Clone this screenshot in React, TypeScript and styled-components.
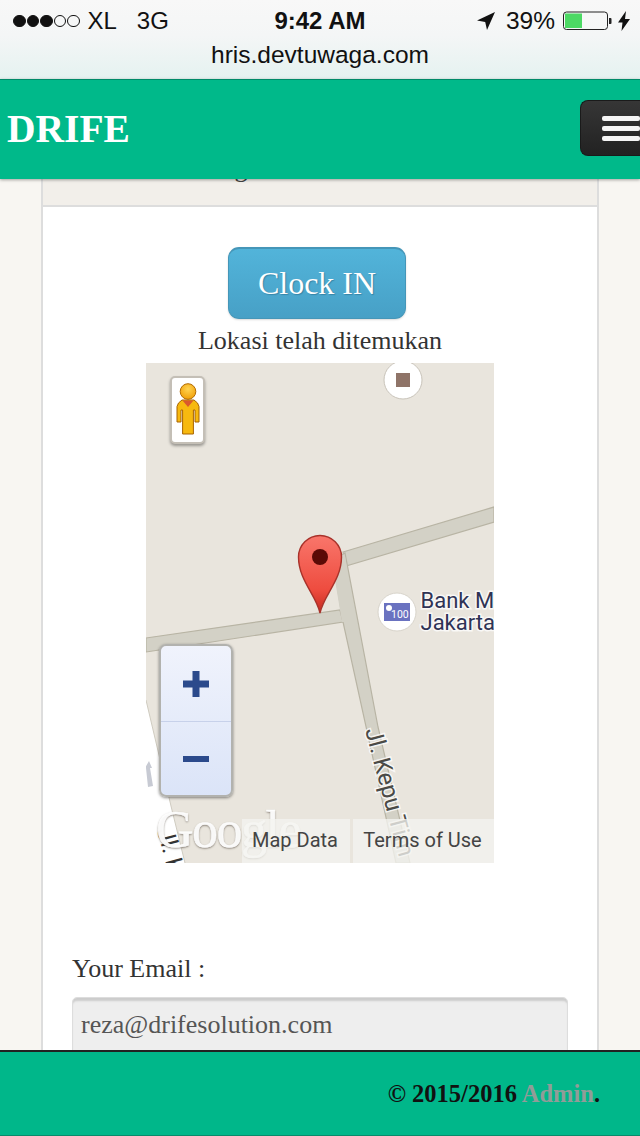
import React from "react";
import styled, { createGlobalStyle } from "styled-components";

const Global = createGlobalStyle`
  html, body { margin: 0; padding: 0; background: #f8f6f2; }
  * { box-sizing: border-box; }
`;

const Screen = styled.div`
  width: 640px;
  height: 1136px;
  display: flex;
  flex-direction: column;
  overflow: hidden;
  font-family: "Liberation Serif", "Times New Roman", serif;
  color: #333;
`;

const Chrome = styled.header`
  height: 79px;
  flex: none;
  background: linear-gradient(#f8f8f8 0%, #f4f6f6 45%, #e5f2f0 100%);
  font-family: "Liberation Sans", Arial, sans-serif;
  color: #111;
`;

const StatusBar = styled.div`
  height: 40px;
  padding: 2px 10px 0 13px;
  display: grid;
  grid-template-columns: 1fr auto 1fr;
  align-items: center;
  font-size: 24px;
`;

const StatusSide = styled.div<{ $end?: boolean }>`
  display: flex;
  align-items: center;
  justify-content: ${(p) => (p.$end ? "flex-end" : "flex-start")};
`;

const Signal = styled.div`
  display: flex;
  gap: 1px;
  margin-right: 8px;
`;

const Dot = styled.span<{ $on: boolean }>`
  width: 12.5px;
  height: 12.5px;
  border-radius: 50%;
  border: 1px solid #111;
  background: ${(p) => (p.$on ? "#111" : "transparent")};
`;

const Carrier = styled.span`
  margin-right: 20px;
`;

const Clock = styled.div`
  font-weight: 700;
  font-size: 24px;
  margin-right: 3px;
`;

const Percent = styled.span`
  margin: 0 8px 0 11px;
  font-size: 24.5px;
`;

const Address = styled.div`
  text-align: center;
  font-size: 24.5px;
  line-height: 30px;
`;

const NavBar = styled.nav`
  height: 100px;
  flex: none;
  background: #00b98a;
  border-top: 1px solid #008a68;
  box-shadow: 0 1px 3px rgba(0, 0, 0, 0.35);
  display: flex;
  align-items: center;
  justify-content: space-between;
  padding-left: 7px;
  position: relative;
  z-index: 2;
`;

const Brand = styled.div`
  color: #fff;
  font-weight: 700;
  font-size: 39.5px;
  position: relative;
  top: -1px;
`;

const MenuToggle = styled.button`
  width: 60px;
  height: 56px;
  margin-top: -3px;
  padding: 0 0 0 21px;
  border: 1px solid #1a1a1a;
  border-right: 0;
  border-radius: 8px 0 0 8px;
  background: linear-gradient(#363636, #222);
  display: flex;
  flex-direction: column;
  justify-content: center;
  gap: 5px;
`;

const MenuBar = styled.span`
  display: block;
  width: 38px;
  height: 5px;
  border-radius: 2px;
  background: #f5f5f5;
`;

const Main = styled.main`
  flex: 1;
  min-height: 0;
  overflow: hidden;
  padding: 0 41px;
`;

const Panel = styled.section`
  border: 2px solid #ddd;
  border-top: 0;
  background: #fff;
`;

const PanelHeading = styled.div`
  height: 28px;
  background: #f2efea;
  border-bottom: 2px solid #ddd;
  overflow: hidden;
  font-size: 26px;
  line-height: 28px;
  padding-left: 97px;
  color: #444;
`;

const PanelHeadingText = styled.span`
  display: block;
  margin-top: -24px;
`;

const PanelBody = styled.div`
  padding: 40px 29px 0;
  display: flex;
  flex-direction: column;
  align-items: center;
`;

const ClockButton = styled.button`
  width: 178px;
  height: 72px;
  margin-right: 6px;
  border: 1px solid #4596b8;
  border-top: 2px solid #4596b8;
  border-radius: 11px;
  background: linear-gradient(#52b4da, #47a0c6);
  color: #fff;
  font-family: "Liberation Serif", serif;
  font-size: 32px;
  box-shadow: 0 1px 2px rgba(0, 0, 0, 0.15);
  text-shadow: 1px 1px 1px rgba(30, 90, 120, 0.45);
`;

const Status = styled.div`
  height: 44px;
  line-height: 44px;
  font-size: 26px;
`;

const MapCanvas = styled.div`
  width: 348px;
  height: 500px;
  position: relative;
  overflow: hidden;
  background: #e9e5dd;
  font-family: Roboto, sans-serif;
`;

const MapDrawing = styled.svg`
  position: absolute;
  left: 0;
  top: 0;
`;

const PegmanBox = styled.div`
  position: absolute;
  left: 24px;
  top: 13px;
  width: 35px;
  height: 68px;
  background: #fff;
  border: 2px solid #c4bfb6;
  border-radius: 5px;
  box-shadow: 0 2px 3px rgba(0, 0, 0, 0.35);
  display: flex;
  justify-content: center;
  padding-top: 5px;
`;

const ZoomControl = styled.div`
  position: absolute;
  left: 13px;
  top: 281px;
  width: 74px;
  height: 153px;
  border: 2px solid #b2b2ae;
  border-radius: 7px;
  background: linear-gradient(#f0f3fc, #dbe4f8);
  box-shadow: 0 1px 3px rgba(0, 0, 0, 0.45);
  display: grid;
  grid-template-rows: 76px 1fr;
`;

const ZoomPart = styled.div<{ $divider?: boolean }>`
  display: flex;
  align-items: center;
  justify-content: center;
  border-bottom: ${(p) => (p.$divider ? "1px solid #c7d1ea" : "0")};
`;

const LogoText = styled.div`
  position: absolute;
  left: 10px;
  top: 437px;
  font-family: "Liberation Serif", serif;
  font-size: 52px;
  line-height: 60px;
  letter-spacing: -1.5px;
  color: rgba(255, 255, 255, 0.95);
  -webkit-text-stroke: 0.5px #fff;
  text-shadow: 0 1px 2px rgba(90, 80, 70, 0.8);
`;

const Attribution = styled.div`
  position: absolute;
  left: 96px;
  right: 0;
  bottom: 0;
  height: 44px;
  display: grid;
  grid-template-columns: 108px 141px;
  column-gap: 3px;
`;

const AttributionLink = styled.div`
  background: rgba(244, 243, 240, 0.78);
  font-size: 20px;
  line-height: 42px;
  color: #444;
  text-align: center;
  padding-right: 2px;
`;

const EmailLabel = styled.label`
  align-self: stretch;
  margin-top: 89px;
  font-size: 26px;
  line-height: 34px;
`;

const EmailField = styled.div`
  align-self: stretch;
  height: 70px;
  margin-top: 11px;
  padding: 8px 0 0 8px;
  background: #eee;
  border: 1px solid #ddd;
  border-radius: 5px;
  box-shadow: inset 0 4px 2px -1px #ccc;
  font-size: 26px;
  line-height: 38px;
  color: #555;
`;

const Footer = styled.footer`
  height: 86px;
  flex: none;
  background: #00b78a;
  border-top: 2px solid #222;
  border-bottom: 1px solid #088a6b;
  padding: 28px 40px 0 0;
  text-align: right;
  font-size: 24.5px;
  font-weight: 700;
  line-height: 28px;
  color: #111;
  position: relative;
  z-index: 2;
`;

const AdminLink = styled.span`
  color: #919c98;
`;

const halo = { paintOrder: "stroke", stroke: "#fff", strokeWidth: 3, strokeOpacity: 0.75 } as const;

const LocationArrow = () => (
  <svg width="18" height="18" viewBox="0 0 18 18" style={{ marginLeft: -2 }}>
    <path d="M18 0 0 8.5l8.2 1.6L10 18z" fill="#111" />
  </svg>
);

const Battery = () => (
  <svg width="50" height="20" viewBox="0 0 50 20">
    <rect x="0.5" y="1" width="44" height="17.5" rx="3" fill="none" stroke="#222" />
    <rect x="2" y="2.5" width="17" height="14.5" fill="#4cd964" />
    <path d="M46 7h1.5a1 1 0 0 1 1 1v4a1 1 0 0 1-1 1H46z" fill="#222" />
  </svg>
);

const Bolt = () => (
  <svg width="12" height="20" viewBox="0 0 12 20" style={{ marginLeft: 5 }}>
    <path d="M8 0 0 11.5h4.5L3.5 20 12 8H7z" fill="#111" />
  </svg>
);

const Pegman = () => (
  <svg width="24" height="52" viewBox="0 0 24 52">
    <defs>
      <radialGradient id="peg" cx="50%" cy="35%" r="60%">
        <stop offset="0" stopColor="#ffd452" />
        <stop offset="1" stopColor="#f2a40e" />
      </radialGradient>
    </defs>
    <circle cx="12" cy="8.5" r="7.8" fill="url(#peg)" stroke="#b36b00" strokeWidth="1" />
    <path d="M6 17h12l3.500 3 1.500 3.500V39h-4V27h-1.600v24H6.600V27H5v12H1V23.500L2.500 20z" fill="#f7b90f" stroke="#a76300" strokeWidth="1" />
    <path d="M6.500 17.500h11L12 24z" fill="#d9592d" />
  </svg>
);

const ZoomPlus = () => (
  <svg width="26" height="26" viewBox="0 0 26 26">
    <path d="M9.500 0h7v9.500H26v7h-9.500V26h-7v-9.500H0v-7h9.500z" fill="#2b4a8c" />
  </svg>
);

const ZoomMinus = () => (
  <svg width="26" height="6" viewBox="0 0 26 6">
    <rect width="26" height="6" fill="#2b4a8c" />
  </svg>
);

const road = { fill: "#d3d1c6", stroke: "#b8b4a4", strokeWidth: 1.2 };

const MapArt = () => (
  <MapDrawing width="348" height="500" viewBox="0 0 348 500">
    <defs>
      <linearGradient id="pin" x1="0" y1="0" x2="0" y2="1">
        <stop offset="0" stopColor="#f9766b" />
        <stop offset="0.7" stopColor="#ee4c3f" />
        <stop offset="1" stopColor="#c52a20" />
      </linearGradient>
    </defs>
    <path d="M0 337 25 443 39 500H0z" fill="#fff" />
    <path d="M0 337 25 443 39 500" fill="none" stroke="#cfcbc0" />
    <path d="M0 275 194 247 197 259 0 289z" {...road} />
    <path d="M197 189 348 144V159L200 203z" {...road} />
    <path d="M187 197 199 190 232 364 264 500H250L197 259z" {...road} />
    <path d="M186 199 199 193 209 259 196 259z" fill="#d3d1c6" />
    <path d="M-1 405l4-7 3 7-2 0 3 18-5 1-2-19z" fill="#c7cad3" />
    <text transform="translate(11 467) rotate(75)" fontFamily="Roboto, sans-serif" fontSize="24" fill="#333">Jl. K</text>
    <text transform="translate(219 367) rotate(75)" fontFamily="Roboto, sans-serif" fontSize="24" fill="#4a4a46" {...halo}>Jl. Kepu Tim</text>

    <circle cx="257" cy="17" r="19" fill="#fff" stroke="#c9c4ba" />
    <rect x="250" y="10" width="14" height="14" fill="#8f7468" />

    <circle cx="251" cy="249" r="19" fill="#fff" stroke="#d8d4cb" />
    <rect x="238" y="240" width="26" height="18" fill="#6a72c0" />
    <circle cx="243" cy="245" r="3" fill="#fff" />
    <text x="245" y="255" fontFamily="Roboto, sans-serif" fontSize="10.5" fill="#fff">100</text>
    <text x="274.5" y="245" fontFamily="Roboto, sans-serif" fontSize="22" fill="#2f3355" {...halo}>Bank M</text>
    <text x="274.5" y="267" fontFamily="Roboto, sans-serif" fontSize="22" fill="#2f3355" {...halo}>Jakarta</text>

    <path d="M174 250C170 232 152.500 217 152.500 194a21.500 21.500 0 0 1 43 0C195.500 217 178 232 174 250z" fill="url(#pin)" stroke="#a8322a" strokeWidth="1.4" />
    <circle cx="174" cy="194" r="8" fill="#5a0a06" />
  </MapDrawing>
);

export default function App() {
  return (
    <Screen>
      <Global />
      <Chrome>
        <StatusBar>
          <StatusSide>
            <Signal>
              {[1, 1, 1, 0, 0].map((on, i) => (
                <Dot key={i} $on={!!on} />
              ))}
            </Signal>
            <Carrier>XL</Carrier>
            <span>3G</span>
          </StatusSide>
          <Clock>9:42 AM</Clock>
          <StatusSide $end>
            <LocationArrow />
            <Percent>39%</Percent>
            <Battery />
            <Bolt />
          </StatusSide>
        </StatusBar>
        <Address>hris.devtuwaga.com</Address>
      </Chrome>
      <NavBar>
        <Brand>DRIFE</Brand>
        <MenuToggle aria-label="Menu">
          <MenuBar />
          <MenuBar />
          <MenuBar />
        </MenuToggle>
      </NavBar>
      <Main>
        <Panel>
          <PanelHeading>
            <PanelHeadingText>Clock Page</PanelHeadingText>
          </PanelHeading>
          <PanelBody>
            <ClockButton>Clock IN</ClockButton>
            <Status>Lokasi telah ditemukan</Status>
            <MapCanvas>
              <MapArt />
              <PegmanBox>
                <Pegman />
              </PegmanBox>
              <ZoomControl>
                <ZoomPart $divider>
                  <ZoomPlus />
                </ZoomPart>
                <ZoomPart>
                  <ZoomMinus />
                </ZoomPart>
              </ZoomControl>
              <LogoText>Google</LogoText>
              <Attribution>
                <AttributionLink>Map Data</AttributionLink>
                <AttributionLink>Terms of Use</AttributionLink>
              </Attribution>
            </MapCanvas>
            <EmailLabel>Your Email :</EmailLabel>
            <EmailField>reza@drifesolution.com</EmailField>
          </PanelBody>
        </Panel>
      </Main>
      <Footer>
        © 2015/2016 <AdminLink>Admin</AdminLink>.
      </Footer>
    </Screen>
  );
}
